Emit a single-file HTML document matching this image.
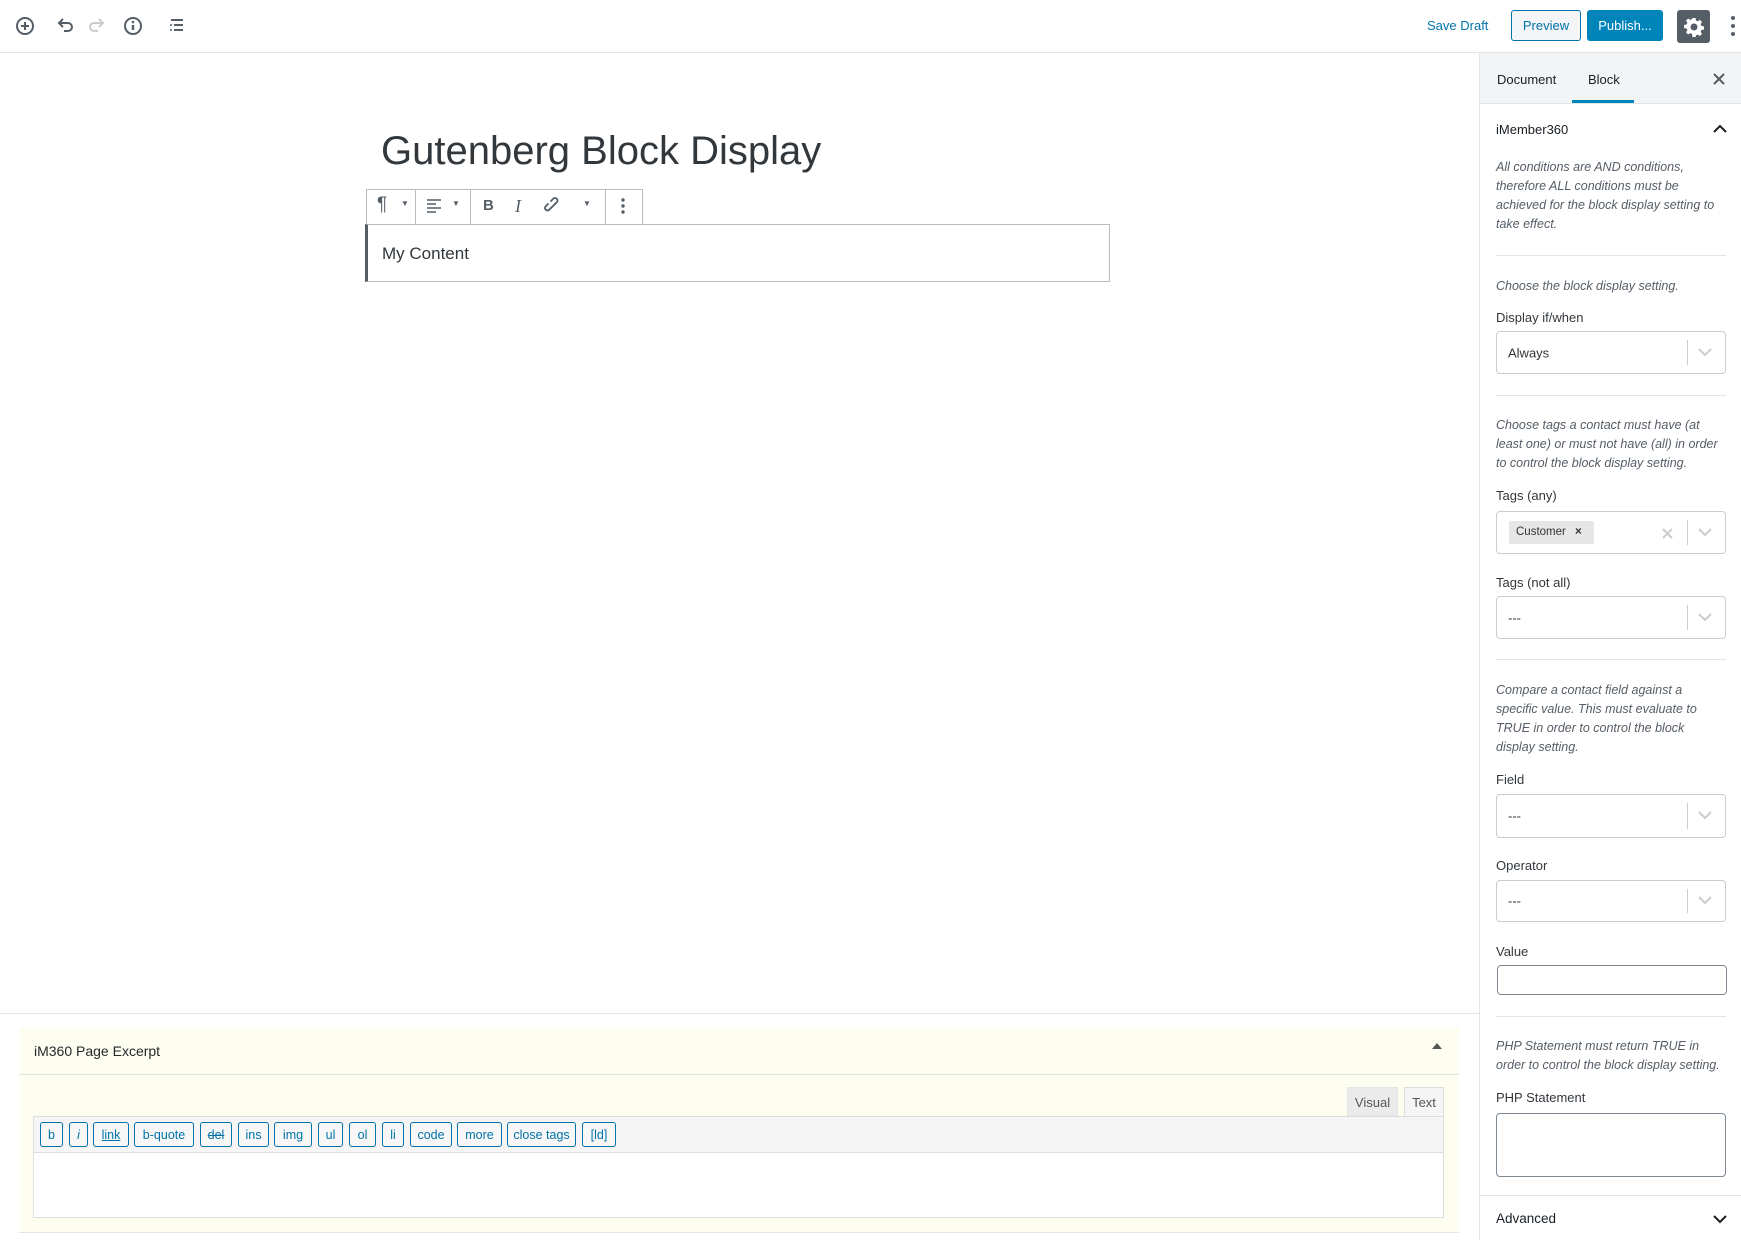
<!DOCTYPE html>
<html><head><meta charset="utf-8"><style>
*{box-sizing:border-box;margin:0;padding:0}
body{width:1741px;height:1240px;overflow:hidden;background:#fff;font-family:"Liberation Sans",sans-serif;color:#191e23;position:relative}
.a{position:absolute}
.hdr{left:0;top:0;width:1741px;height:53px;border-bottom:1px solid #e2e4e7}
.btn{position:absolute;border-radius:3px;font-size:13px;display:flex;align-items:center;justify-content:center}
.side{left:1479px;top:53px;width:262px;height:1187px;border-left:1px solid #e2e4e7}
.it{font-style:italic;color:#555d66;font-size:12.5px;line-height:19px;left:1496px;white-space:nowrap}
.lbl{font-size:13px;color:#32373c;left:1496px}
.sel{left:1496px;width:230px;border:1px solid #ccc;border-radius:4px;background:#fff}
.sel .bar{position:absolute;right:37px;top:8px;bottom:8px;width:1px;background:#ccc}
.sel .ch{position:absolute;right:13px;top:50%;margin-top:-6px}
.sel .v{position:absolute;left:11px;top:50%;transform:translateY(-50%);font-size:13px;color:#333}
.sep{left:1496px;width:230px;height:1px;background:#e2e4e7}
.qb{position:absolute;top:1122px;height:25px;border:1px solid #0073aa;border-radius:3px;background:#f7f7f7;color:#0073aa;font-size:12.5px;display:flex;align-items:center;justify-content:center}
.tb{position:absolute;top:189px;font-size:15px;color:#555d66}
</style></head><body>
<div class="a hdr"></div>
<svg class="a" style="left:14px;top:15px" width="170" height="22" viewBox="0 0 170 22">
<g fill="none" stroke="#555d66" stroke-width="2">
<circle cx="11" cy="11" r="8"/><path d="M11 7v8M7 11h8"/>
<path d="M46 8h8a4 4 0 0 1 0 8h-4"/><path d="M49 4l-4 4 4 4"/>
<g stroke="#ccc"><path d="M88 8h-8a4 4 0 0 0 0 8h4"/><path d="M85 4l4 4-4 4"/></g>
<circle cx="119" cy="11" r="8"/><path d="M119 10v5" stroke-width="2.4"/>
<path d="M157 5h12M160 10h9M160 15h9"/>
</g><circle cx="119" cy="7" r="1.3" fill="#555d66"/><circle cx="157" cy="10" r="1" fill="#555d66"/><circle cx="157" cy="15" r="1" fill="#555d66"/>
</svg>
<div class="a" style="left:1427px;top:18px;font-size:13px;color:#0073aa">Save Draft</div>
<div class="btn" style="left:1511px;top:10px;width:70px;height:31px;border:1px solid #0073aa;background:#f3f5f6;color:#0073aa">Preview</div>
<div class="btn" style="left:1587px;top:10px;width:76px;height:31px;background:#0085ba;color:#fff">Publish...</div>
<div class="btn" style="left:1677px;top:10px;width:33px;height:33px;background:#555d66">
<svg width="20" height="20" viewBox="0 0 20 20"><path fill="#fff" d="M8.5 1h3l.5 2.5 1.8.8 2.1-1.4 2.1 2.1-1.4 2.1.8 1.8 2.6.6v3l-2.6.5-.8 1.8 1.4 2.1-2.1 2.1-2.1-1.4-1.8.8-.5 2.6h-3L8 16.9l-1.8-.8-2.1 1.4L2 15.4l1.4-2.1-.8-1.8L0 11V8l2.6-.5.8-1.8L2 3.6 4.1 1.5l2.1 1.4L8 2.1z M10 6.5a3.5 3.5 0 1 0 0 7 3.5 3.5 0 0 0 0-7z"/></svg></div>
<svg class="a" style="left:1729px;top:15px" width="8" height="22"><circle cx="4" cy="3" r="2" fill="#555d66"/><circle cx="4" cy="11" r="2" fill="#555d66"/><circle cx="4" cy="19" r="2" fill="#555d66"/></svg>

<div class="a side"></div>
<div class="a" style="left:1480px;top:53px;width:261px;height:51px;background:#f3f4f5;border-bottom:1px solid #e2e4e7"></div>
<div class="a" style="left:1497px;top:72px;font-size:13px">Document</div>
<div class="a" style="left:1588px;top:72px;font-size:13px">Block</div>
<div class="a" style="left:1572px;top:100px;width:62px;height:3px;background:#0085ba"></div>
<svg class="a" style="left:1713px;top:73px" width="12" height="12"><path d="M1 1l10 10M11 1L1 11" stroke="#555d66" stroke-width="2"/></svg>
<div class="a" style="left:1496px;top:122px;font-size:13px;font-weight:500">iMember360</div>
<svg class="a" style="left:1713px;top:124px" width="14" height="9"><path d="M1 8l6-6 6 6" fill="none" stroke="#191e23" stroke-width="2"/></svg>
<div class="a it" style="top:158px">All conditions are AND conditions,<br>therefore ALL conditions must be<br>achieved for the block display setting to<br>take effect.</div>
<div class="a sep" style="top:255px"></div>
<div class="a it" style="top:277px">Choose the block display setting.</div>
<div class="a lbl" style="top:310px">Display if/when</div>
<div class="a sel" style="top:331px;height:43px"><span class="v">Always</span><div class="bar"></div><svg class="ch" width="14" height="10"><path d="M1 2l6 6 6-6" fill="none" stroke="#ccc" stroke-width="2"/></svg></div>
<div class="a sep" style="top:395px"></div>
<div class="a it" style="top:416px">Choose tags a contact must have (at<br>least one) or must not have (all) in order<br>to control the block display setting.</div>
<div class="a lbl" style="top:488px">Tags (any)</div>
<div class="a sel" style="top:511px;height:43px"><div style="position:absolute;left:12px;top:9px;width:85px;height:23px;background:#e6e6e6;border-radius:2px;font-size:11.5px;color:#333;padding:5px 0 0 7px">Customer <span style="margin-left:6px;font-weight:bold">×</span></div><svg style="position:absolute;right:52px;top:16px" width="11" height="11"><path d="M1 1l9 9M10 1L1 10" stroke="#ccc" stroke-width="2"/></svg><div class="bar"></div><svg class="ch" width="14" height="10"><path d="M1 2l6 6 6-6" fill="none" stroke="#ccc" stroke-width="2"/></svg></div>
<div class="a lbl" style="top:575px">Tags (not all)</div>
<div class="a sel" style="top:596px;height:43px"><span class="v">---</span><div class="bar"></div><svg class="ch" width="14" height="10"><path d="M1 2l6 6 6-6" fill="none" stroke="#ccc" stroke-width="2"/></svg></div>
<div class="a sep" style="top:659px"></div>
<div class="a it" style="top:681px">Compare a contact field against a<br>specific value. This must evaluate to<br>TRUE in order to control the block<br>display setting.</div>
<div class="a lbl" style="top:772px">Field</div>
<div class="a sel" style="top:794px;height:44px"><span class="v">---</span><div class="bar"></div><svg class="ch" width="14" height="10"><path d="M1 2l6 6 6-6" fill="none" stroke="#ccc" stroke-width="2"/></svg></div>
<div class="a lbl" style="top:858px">Operator</div>
<div class="a sel" style="top:880px;height:42px"><span class="v">---</span><div class="bar"></div><svg class="ch" width="14" height="10"><path d="M1 2l6 6 6-6" fill="none" stroke="#ccc" stroke-width="2"/></svg></div>
<div class="a lbl" style="top:944px">Value</div>
<div class="a" style="left:1497px;top:965px;width:230px;height:30px;border:1px solid #7e8993;border-radius:4px"></div>
<div class="a sep" style="top:1016px"></div>
<div class="a it" style="top:1037px">PHP Statement must return TRUE in<br>order to control the block display setting.</div>
<div class="a lbl" style="top:1090px">PHP Statement</div>
<div class="a" style="left:1496px;top:1113px;width:230px;height:64px;border:1px solid #7e8993;border-radius:4px"></div>
<div class="a" style="left:1480px;top:1195px;width:261px;height:1px;background:#e2e4e7"></div>
<div class="a" style="left:1496px;top:1211px;font-size:13.5px;font-weight:500">Advanced</div>
<svg class="a" style="left:1713px;top:1215px" width="14" height="9"><path d="M1 1l6 6 6-6" fill="none" stroke="#191e23" stroke-width="2"/></svg>

<div class="a" style="left:381px;top:129px;font-size:40px;color:#32373c">Gutenberg Block Display</div>
<div class="a" style="left:366px;top:189px;width:277px;height:36px;border:1px solid #b5bcc2;border-bottom:none;background:#fff"></div>
<div class="a" style="left:415px;top:189px;width:1px;height:35px;background:#b5bcc2"></div>
<div class="a" style="left:470px;top:189px;width:1px;height:35px;background:#b5bcc2"></div>
<div class="a" style="left:605px;top:189px;width:1px;height:35px;background:#b5bcc2"></div>
<div class="a" style="left:365px;top:224px;width:745px;height:58px;border:1px solid #b5bcc2;border-left:3px solid #555d66"></div>
<div class="tb" style="left:377px;top:194px;font-size:19px">¶</div>
<div class="tb" style="left:401px;top:199px;font-size:8px">▼</div>
<svg class="a" style="left:427px;top:199px" width="16" height="14"><path d="M0 1h14M0 5h9M0 9h14M0 13h9" stroke="#555d66" stroke-width="1.6"/></svg>
<div class="tb" style="left:452px;top:199px;font-size:8px">▼</div>
<div class="tb" style="left:483px;top:197px;font-weight:bold">B</div>
<div class="tb" style="left:515px;top:196px;font-style:italic;font-family:'Liberation Serif',serif;font-size:18px">I</div>
<svg class="a" style="left:544px;top:197px" width="18" height="18"><g fill="none" stroke="#555d66" stroke-width="1.8"><path d="M8 10l-3 3a2.5 2.5 0 0 1-3.5-3.5l3-3"/><path d="M10 8l3-3a2.5 2.5 0 0 0-3.5-3.5l-3 3"/><path d="M6 12l6-6"/></g></svg>
<div class="tb" style="left:583px;top:199px;font-size:8px">▼</div>
<svg class="a" style="left:620px;top:197px" width="6" height="18"><circle cx="3" cy="3" r="1.7" fill="#555d66"/><circle cx="3" cy="9" r="1.7" fill="#555d66"/><circle cx="3" cy="15" r="1.7" fill="#555d66"/></svg>
<div class="a" style="left:382px;top:244px;font-size:17px;color:#32373c">My Content</div>

<div class="a" style="left:0;top:1013px;width:1480px;height:1px;background:#e2e4e7"></div>
<div class="a" style="left:19px;top:1027px;width:1440px;height:206px;background:#fefef0;border-bottom:1px solid #e2e4e7"></div>
<div class="a" style="left:19px;top:1074px;width:1440px;height:1px;background:#e2e4e7"></div>
<div class="a" style="left:34px;top:1043px;font-size:14px;color:#23282d">iM360 Page Excerpt</div>
<svg class="a" style="left:1432px;top:1042px" width="10" height="8"><path d="M0 7l5-6 5 6z" fill="#555"/></svg>
<div class="a" style="left:1347px;top:1087px;width:51px;height:29px;background:#ebebeb;border:1px solid #e5e5e5;font-size:13px;color:#555;text-align:center;padding-top:7px">Visual</div>
<div class="a" style="left:1404px;top:1087px;width:40px;height:30px;background:#f5f5f5;border:1px solid #ddd;border-bottom:none;font-size:13px;color:#555;text-align:center;padding-top:7px">Text</div>
<div class="a" style="left:33px;top:1116px;width:1411px;height:102px;border:1px solid #ddd;background:#fff"></div>
<div class="a" style="left:34px;top:1117px;width:1409px;height:36px;background:#f5f5f5;border-bottom:1px solid #ddd"></div>
<div class="qb" style="left:40px;width:23px">b</div>
<div class="qb" style="left:69px;width:19px;font-style:italic">i</div>
<div class="qb" style="left:93px;width:36px;text-decoration:underline">link</div>
<div class="qb" style="left:134px;width:60px">b-quote</div>
<div class="qb" style="left:200px;width:32px;text-decoration:line-through">del</div>
<div class="qb" style="left:238px;width:31px">ins</div>
<div class="qb" style="left:274px;width:38px">img</div>
<div class="qb" style="left:318px;width:25px">ul</div>
<div class="qb" style="left:349px;width:27px">ol</div>
<div class="qb" style="left:382px;width:22px">li</div>
<div class="qb" style="left:410px;width:42px">code</div>
<div class="qb" style="left:457px;width:45px">more</div>
<div class="qb" style="left:507px;width:69px">close tags</div>
<div class="qb" style="left:582px;width:34px">[ld]</div>
</body></html>
